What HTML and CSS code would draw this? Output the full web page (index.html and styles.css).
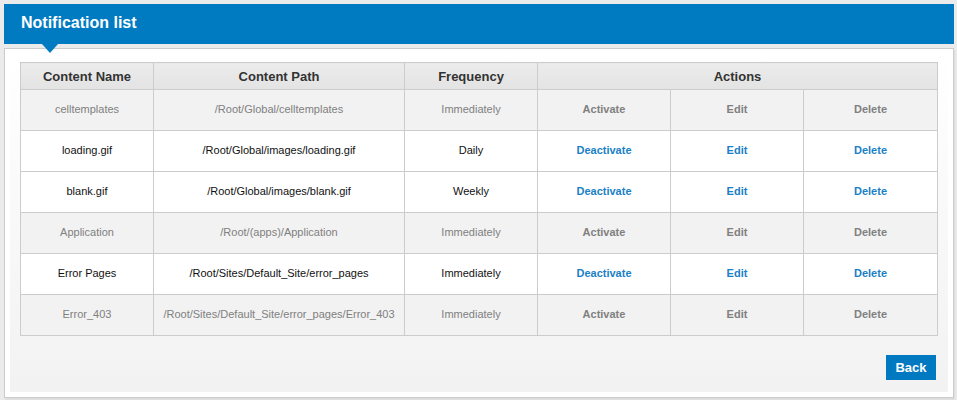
FILE: index.html
```html
<!DOCTYPE html>
<html>
<head>
<meta charset="utf-8">
<title>Notification list</title>
<link rel="stylesheet" href="styles.css">
</head>
<body>
<div class="wrap">
  <div class="title-bar"><h1 class="title">Notification list</h1></div>
  <div class="panel">
    <div class="inner">
      <table class="grid">
        <colgroup>
          <col class="c-name"><col class="c-path"><col class="c-freq"><col class="c-act"><col class="c-act"><col class="c-act2">
        </colgroup>
        <thead>
          <tr>
            <th>Content Name</th>
            <th>Content Path</th>
            <th>Frequency</th>
            <th colspan="3">Actions</th>
          </tr>
        </thead>
        <tbody>
          <tr class="off">
            <td>celltemplates</td><td>/Root/Global/celltemplates</td><td>Immediately</td>
            <td class="act">Activate</td><td class="act">Edit</td><td class="act">Delete</td>
          </tr>
          <tr class="on">
            <td>loading.gif</td><td>/Root/Global/images/loading.gif</td><td>Daily</td>
            <td class="act">Deactivate</td><td class="act">Edit</td><td class="act">Delete</td>
          </tr>
          <tr class="on">
            <td>blank.gif</td><td>/Root/Global/images/blank.gif</td><td>Weekly</td>
            <td class="act">Deactivate</td><td class="act">Edit</td><td class="act">Delete</td>
          </tr>
          <tr class="off">
            <td>Application</td><td>/Root/(apps)/Application</td><td>Immediately</td>
            <td class="act">Activate</td><td class="act">Edit</td><td class="act">Delete</td>
          </tr>
          <tr class="on">
            <td>Error Pages</td><td>/Root/Sites/Default_Site/error_pages</td><td>Immediately</td>
            <td class="act">Deactivate</td><td class="act">Edit</td><td class="act">Delete</td>
          </tr>
          <tr class="off">
            <td>Error_403</td><td>/Root/Sites/Default_Site/error_pages/Error_403</td><td>Immediately</td>
            <td class="act">Activate</td><td class="act">Edit</td><td class="act">Delete</td>
          </tr>
        </tbody>
      </table>
      <div class="footer"><button class="btn">Back</button></div>
    </div>
  </div>
</div>
</body>
</html>
```
FILE: styles.css
```css
html, body {
  margin: 0;
  padding: 0;
}
body {
  background: #ebebeb;
  font-family: "Liberation Sans", Arial, sans-serif;
  height: 400px;
  overflow: hidden;
}
.wrap {
  width: 950px;
  padding: 4px 0 0 4px;
}
.title-bar {
  position: relative;
  height: 40px;
  background: #007bc1;
}
.title-bar::after {
  content: "";
  position: absolute;
  left: 38px;
  top: 40px;
  width: 0;
  height: 0;
  border-left: 8px solid transparent;
  border-right: 8px solid transparent;
  border-top: 9px solid #007bc1;
  z-index: 2;
}
.title {
  margin: 0;
  padding-left: 17px;
  font-size: 16px;
  font-weight: bold;
  color: #fff;
  line-height: 38px;
}
.panel {
  margin-top: 4px;
  border: 1px solid #cccccc;
  background: #fff;
  padding: 5px;
  box-shadow: 1px 2px 2px rgba(0, 0, 0, 0.07);
}
.inner {
  padding: 8px 10px 12px 10px;
  background: linear-gradient(#ffffff, #f2f2f2);
}
.grid {
  width: 918px;
  border-collapse: collapse;
  table-layout: fixed;
  border: 1px solid #cccccc;
}
.c-name { width: 133px; }
.c-path { width: 251px; }
.c-freq { width: 133px; }
.c-act { width: 133px; }
.c-act2 { width: 134px; }
.grid th {
  height: 26px;
  padding: 0;
  border: 1px solid #cccccc;
  background: linear-gradient(#ececec, #e3e3e3);
  color: #333;
  font-size: 13px;
  font-weight: bold;
  text-align: center;
}
.grid td {
  height: 38px;
  padding: 0 0 2px 0;
  border: 1px solid #cccccc;
  font-size: 11px;
  text-align: center;
  white-space: nowrap;
}
.off td {
  background: #f2f2f2;
  color: #808080;
}
.on td {
  background: #ffffff;
  color: #111;
}
.grid td.act {
  font-weight: bold;
}
.on td.act {
  color: #1a7fc6;
}
.off td.act {
  color: #808080;
}
.footer {
  display: flex;
  justify-content: flex-end;
  padding-top: 19px;
  padding-right: 2px;
}
.btn {
  width: 50px;
  height: 25px;
  border: 0;
  margin: 0;
  padding: 0;
  background: #0079c1;
  color: #fff;
  font-family: "Liberation Sans", Arial, sans-serif;
  font-size: 13px;
  font-weight: bold;
  cursor: pointer;
}
```
